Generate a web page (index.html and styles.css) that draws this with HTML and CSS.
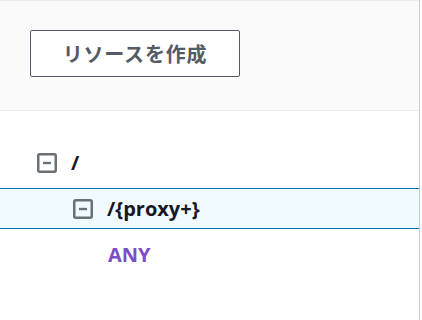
FILE: index.html
```html
<!DOCTYPE html>
<html lang="ja">
<head>
<meta charset="utf-8">
<link rel="stylesheet" href="styles.css">
</head>
<body>
<div class="panel">
  <div class="header">
    <button class="btn">リソースを作成</button>
  </div>
  <div class="tree">
    <div class="row lvl0">
      <svg class="toggle" viewBox="0 0 20 20" width="20" height="20"><rect x="1.25" y="1.25" width="17.5" height="17.5" rx="1.5" fill="none" stroke="#687078" stroke-width="2.5"/><line x1="6" y1="10" x2="14" y2="10" stroke="#687078" stroke-width="2.4"/></svg>
      <span class="label">/</span>
    </div>
    <div class="row lvl1 selected">
      <svg class="toggle" viewBox="0 0 20 20" width="20" height="20"><rect x="1.25" y="1.25" width="17.5" height="17.5" rx="1.5" fill="none" stroke="#687078" stroke-width="2.5"/><line x1="6" y1="10" x2="14" y2="10" stroke="#687078" stroke-width="2.4"/></svg>
      <span class="label">/{proxy+}</span>
    </div>
    <div class="row lvl2">
      <span class="method">ANY</span>
    </div>
  </div>
</div>
</body>
</html>
```
FILE: styles.css
```css
html, body {
  margin: 0;
  padding: 0;
  background: #ffffff;
}
body {
  width: 422px;
  height: 320px;
  overflow: hidden;
  font-family: "Open Sans", "Noto Sans CJK JP", sans-serif;
}
.panel {
  width: 419px;
  height: 320px;
  border-right: 1px solid #c6cbcc;
  box-sizing: content-box;
}
.header {
  background: #fafafa;
  border-top: 1px solid #eaeded;
  border-bottom: 1px solid #eaeded;
  padding: 29px 0 0 30px;
  box-sizing: border-box;
  height: 111px;
}
.btn {
  display: flex;
  align-items: center;
  justify-content: center;
  width: 210px;
  height: 47px;
  border: 1px solid #545b64;
  border-radius: 2px;
  background: #ffffff;
  color: #545b64;
  font-family: "Noto Sans CJK JP", sans-serif;
  font-weight: 700;
  font-size: 20px;
  letter-spacing: 0.8px;
  padding: 0;
}
.tree {
  padding-top: 31px;
  display: flex;
  flex-direction: column;
  gap: 5px;
}
.row {
  height: 41px;
  display: flex;
  align-items: center;
  box-sizing: border-box;
}
.lvl0 { padding-left: 37px; }
.lvl1 { padding-left: 73px; }
.lvl2 { padding-left: 108px; }
.selected {
  background: #f1faff;
  border-top: 1px solid #0073bb;
  border-bottom: 1px solid #0073bb;
}
.toggle {
  flex: none;
  margin-right: 14px;
}
.label {
  color: #16191f;
  font-weight: 700;
  font-size: 20px;
}
.method {
  color: #7d4cc9;
  font-weight: 700;
  font-size: 20px;
}
```
